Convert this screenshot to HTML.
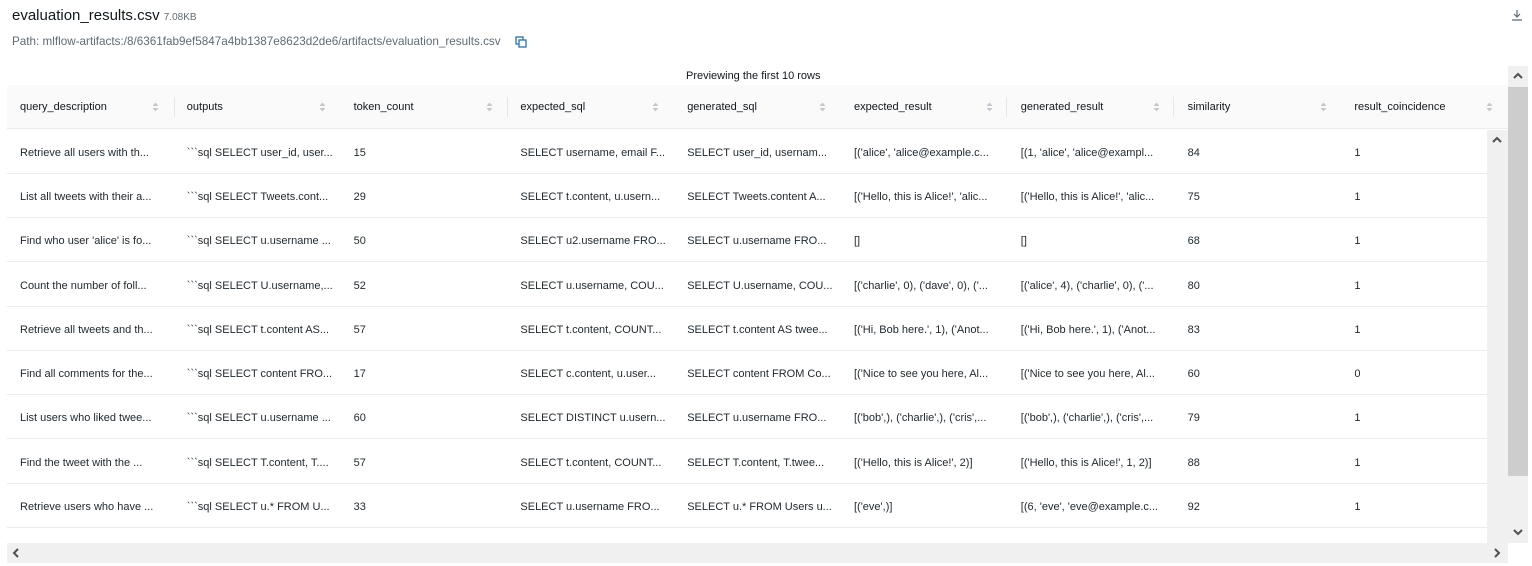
<!DOCTYPE html>
<html><head><meta charset="utf-8"><style>
*{box-sizing:border-box;margin:0;padding:0}
body{width:1532px;height:566px;background:#fff;font-family:"Liberation Sans",sans-serif;color:#1f272d;position:relative;overflow:hidden}
.abs{position:absolute}
.t{font-size:11px;white-space:nowrap}
.hdr{left:7px;top:85px;width:1501px;height:44px;background:#fafafa;border-bottom:1px solid #ebebeb;display:flex;color:#11171c;font-size:11px}
.hdr div{width:166.8px;flex:none;padding:16px 0 0 13px;position:relative}
.hdr svg{position:absolute;left:145px;top:16px}
.row{position:absolute;left:7px;width:1480px;height:44.25px;border-bottom:1px solid #ebebeb;display:flex;font-size:11px;white-space:nowrap}
.row div{width:166.8px;flex:none;padding:17px 0 0 13px;overflow:hidden}
.sep{position:absolute;top:97px;width:1px;height:20px;background:#e6e6e6}
</style></head><body>
<div class="abs" style="left:12px;top:7px;font-size:15px;color:#11171c">evaluation_results.csv <span style="font-size:10px;color:#5f6b74">7.08KB</span></div>
<div class="abs t" style="left:12px;top:35px;color:#5f6b74;font-size:11.7px">Path: mlflow-artifacts:/8/6361fab9ef5847a4bb1387e8623d2de6/artifacts/evaluation_results.csv</div>
<svg class="abs" style="left:515px;top:36px" width="12" height="12" viewBox="0 0 12 12"><rect x="1" y="1" width="7" height="7" fill="none" stroke="#2272b4" stroke-width="1.3"/><rect x="4" y="4" width="7" height="7" fill="#fff" stroke="#2272b4" stroke-width="1.3"/></svg>
<svg class="abs" style="left:1511px;top:9px" width="12" height="12" viewBox="0 0 12 12"><path d="M6 1v7M3 5l3 3 3-3M1 11h10" fill="none" stroke="#5f6b74" stroke-width="1.2"/></svg>
<div class="abs t" style="left:686px;top:70px;color:#11171c">Previewing the first 10 rows</div>

<div class="abs hdr">
<div>query_description<svg width="7" height="12"><path d="M0.5 5L3.5 1.5 6.5 5zM0.5 7l3 3.5 3-3.5z" fill="#c4c8cc"/></svg></div>
<div>outputs<svg width="7" height="12"><path d="M0.5 5L3.5 1.5 6.5 5zM0.5 7l3 3.5 3-3.5z" fill="#c4c8cc"/></svg></div>
<div>token_count<svg width="7" height="12"><path d="M0.5 5L3.5 1.5 6.5 5zM0.5 7l3 3.5 3-3.5z" fill="#c4c8cc"/></svg></div>
<div>expected_sql<svg width="7" height="12"><path d="M0.5 5L3.5 1.5 6.5 5zM0.5 7l3 3.5 3-3.5z" fill="#c4c8cc"/></svg></div>
<div>generated_sql<svg width="7" height="12"><path d="M0.5 5L3.5 1.5 6.5 5zM0.5 7l3 3.5 3-3.5z" fill="#c4c8cc"/></svg></div>
<div>expected_result<svg width="7" height="12"><path d="M0.5 5L3.5 1.5 6.5 5zM0.5 7l3 3.5 3-3.5z" fill="#c4c8cc"/></svg></div>
<div>generated_result<svg width="7" height="12"><path d="M0.5 5L3.5 1.5 6.5 5zM0.5 7l3 3.5 3-3.5z" fill="#c4c8cc"/></svg></div>
<div>similarity<svg width="7" height="12"><path d="M0.5 5L3.5 1.5 6.5 5zM0.5 7l3 3.5 3-3.5z" fill="#c4c8cc"/></svg></div>
<div>result_coincidence<svg width="7" height="12"><path d="M0.5 5L3.5 1.5 6.5 5zM0.5 7l3 3.5 3-3.5z" fill="#c4c8cc"/></svg></div>
</div>
<div class="sep" style="left:174px"></div><div class="sep" style="left:507px"></div><div class="sep" style="left:1006px"></div><div class="sep" style="left:1173px"></div>

<div class="row" style="top:130px"><div>Retrieve all users with th...</div><div>&#96;&#96;&#96;sql SELECT user_id, user...</div><div>15</div><div>SELECT username, email F...</div><div>SELECT user_id, usernam...</div><div>[('alice', 'alice@example.c...</div><div>[(1, 'alice', 'alice@exampl...</div><div>84</div><div>1</div></div>
<div class="row" style="top:174px"><div>List all tweets with their a...</div><div>&#96;&#96;&#96;sql SELECT Tweets.cont...</div><div>29</div><div>SELECT t.content, u.usern...</div><div>SELECT Tweets.content A...</div><div>[('Hello, this is Alice!', 'alic...</div><div>[('Hello, this is Alice!', 'alic...</div><div>75</div><div>1</div></div>
<div class="row" style="top:218px"><div>Find who user 'alice' is fo...</div><div>&#96;&#96;&#96;sql SELECT u.username ...</div><div>50</div><div>SELECT u2.username FRO...</div><div>SELECT u.username FRO...</div><div>[]</div><div>[]</div><div>68</div><div>1</div></div>
<div class="row" style="top:263px"><div>Count the number of foll...</div><div>&#96;&#96;&#96;sql SELECT U.username,...</div><div>52</div><div>SELECT u.username, COU...</div><div>SELECT U.username, COU...</div><div>[('charlie', 0), ('dave', 0), ('...</div><div>[('alice', 4), ('charlie', 0), ('...</div><div>80</div><div>1</div></div>
<div class="row" style="top:307px"><div>Retrieve all tweets and th...</div><div>&#96;&#96;&#96;sql SELECT t.content AS...</div><div>57</div><div>SELECT t.content, COUNT...</div><div>SELECT t.content AS twee...</div><div>[('Hi, Bob here.', 1), ('Anot...</div><div>[('Hi, Bob here.', 1), ('Anot...</div><div>83</div><div>1</div></div>
<div class="row" style="top:351px"><div>Find all comments for the...</div><div>&#96;&#96;&#96;sql SELECT content FRO...</div><div>17</div><div>SELECT c.content, u.user...</div><div>SELECT content FROM Co...</div><div>[('Nice to see you here, Al...</div><div>[('Nice to see you here, Al...</div><div>60</div><div>0</div></div>
<div class="row" style="top:395px"><div>List users who liked twee...</div><div>&#96;&#96;&#96;sql SELECT u.username ...</div><div>60</div><div>SELECT DISTINCT u.usern...</div><div>SELECT u.username FRO...</div><div>[('bob',), ('charlie',), ('cris',...</div><div>[('bob',), ('charlie',), ('cris',...</div><div>79</div><div>1</div></div>
<div class="row" style="top:440px"><div>Find the tweet with the ...</div><div>&#96;&#96;&#96;sql SELECT T.content, T....</div><div>57</div><div>SELECT t.content, COUNT...</div><div>SELECT T.content, T.twee...</div><div>[('Hello, this is Alice!', 2)]</div><div>[('Hello, this is Alice!', 1, 2)]</div><div>88</div><div>1</div></div>
<div class="row" style="top:484px"><div>Retrieve users who have ...</div><div>&#96;&#96;&#96;sql SELECT u.* FROM U...</div><div>33</div><div>SELECT u.username FRO...</div><div>SELECT u.* FROM Users u...</div><div>[('eve',)]</div><div>[(6, 'eve', 'eve@example.c...</div><div>92</div><div>1</div></div>

<div class="abs" style="left:1487px;top:130px;width:21px;height:413px;background:#f0f0f0"></div>
<svg class="abs" style="left:1491px;top:135px" width="12" height="10"><path d="M2 7l4-4 4 4" fill="none" stroke="#505050" stroke-width="2"/></svg>
<div class="abs" style="left:1508px;top:66px;width:20px;height:477px;background:#f0f0f0"></div>
<div class="abs" style="left:1508px;top:87px;width:20px;height:389px;background:#cdcdcd"></div>
<svg class="abs" style="left:1512px;top:71px" width="12" height="10"><path d="M2 7l4-4 4 4" fill="none" stroke="#505050" stroke-width="2"/></svg>
<svg class="abs" style="left:1512px;top:527px" width="12" height="10"><path d="M2 3l4 4 4-4" fill="none" stroke="#505050" stroke-width="2"/></svg>
<div class="abs" style="left:7px;top:543px;width:1501px;height:20px;background:#f0f0f0"></div>
<svg class="abs" style="left:11px;top:547px" width="10" height="12"><path d="M7 2L3 6l4 4" fill="none" stroke="#505050" stroke-width="2"/></svg>
<svg class="abs" style="left:1492px;top:547px" width="10" height="12"><path d="M3 2l4 4-4 4" fill="none" stroke="#505050" stroke-width="2"/></svg>
</body></html>
